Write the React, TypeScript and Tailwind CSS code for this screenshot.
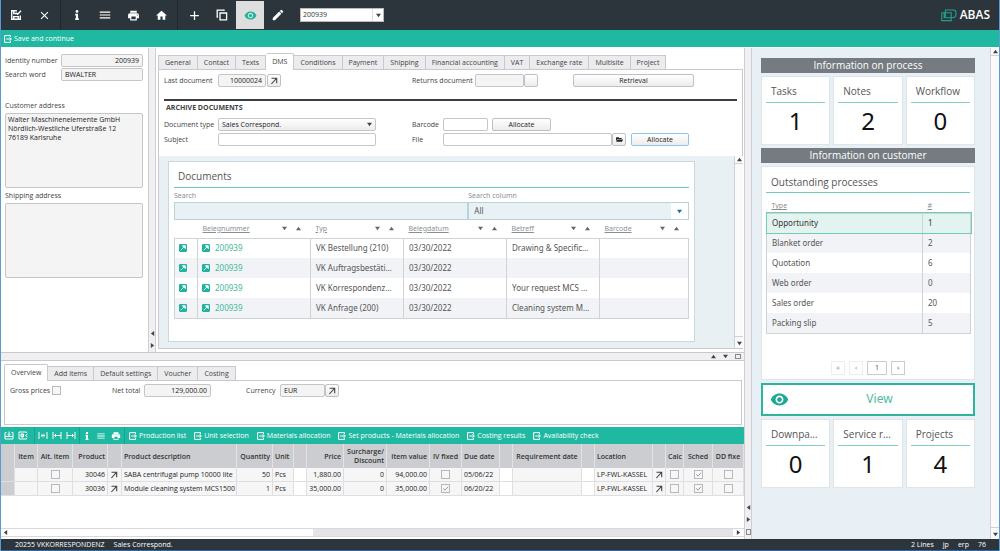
import { useState, type ReactNode } from 'react';
import { FaInfo, FaFolderOpen } from 'react-icons/fa';
import { MdClose, MdMenu, MdPrint, MdHome, MdAdd, MdEdit, MdRemoveRedEye } from 'react-icons/md';

const mainTabs = ['General', 'Contact', 'Texts', 'DMS', 'Conditions', 'Payment', 'Shipping', 'Financial accounting', 'VAT', 'Exchange rate', 'Multisite', 'Project'];
const itemTabs = ['Overview', 'Add items', 'Default settings', 'Voucher', 'Costing'];
const itemActions = ['Production list', 'Unit selection', 'Materials allocation', 'Set products - Materials allocation', 'Costing results', 'Availability check'];

const documents = [
  { id: 1, number: '200939', type: 'VK Bestellung (210)', date: '03/30/2022', subject: 'Drawing & Specific…' },
  { id: 2, number: '200939', type: 'VK Auftragsbestäti…', date: '03/30/2022', subject: '' },
  { id: 3, number: '200939', type: 'VK Korrespondenz…', date: '03/30/2022', subject: 'Your request MCS …' },
  { id: 4, number: '200939', type: 'VK Anfrage (200)', date: '03/30/2022', subject: 'Cleaning system M…' },
];

const processes = [
  ['Opportunity', 1],
  ['Blanket order', 2],
  ['Quotation', 6],
  ['Web order', 0],
  ['Sales order', 20],
  ['Packing slip', 5],
];

const items = [
  { product: '30046', text: 'SABA centrifugal pump 10000 lite', qty: 50, price: '1,880.00', value: '94,000.00', fixed: false, due: '05/06/22' },
  { product: '30036', text: 'Module cleaning system MCS1500', qty: 1, price: '35,000.00', value: '35,000.00', fixed: true, due: '06/20/22' },
];

const field = 'h-[13px] min-w-0 rounded-[2px] border border-[#c6c6c9] px-[3px] text-[7px] text-[#222] outline-none';
const button = 'flex h-[13px] items-center justify-center rounded-[2px] border border-[#c0c0c3] bg-linear-to-b from-white to-[#ececee] text-[7px] text-[#222]';

function ArrowIcon() {
  return (
    <svg className="h-[8px] w-[8px]" viewBox="0 0 8 8" fill="none" stroke="#444" strokeWidth="1.1">
      <path d="M1.5 1.2h5.2v5M6.5 1.4 1.4 7" />
    </svg>
  );
}

function ExportIcon() {
  return (
    <svg className="h-[8px] w-[8px]" viewBox="0 0 8 8" fill="none" stroke="currentColor" strokeWidth="1">
      <path d="M6.5 2V.6H.6v6.8h5.9V6M2.2 4h5M5.6 2.2 7.4 4 5.6 5.8" />
    </svg>
  );
}

function SaveIcon() {
  return (
    <svg className="h-[12px] w-[12px]" viewBox="0 0 12 12" fill="none" stroke="currentColor" strokeWidth="1.4">
      <path d="M10.3 6.5v3.8H1.7V1.7h5.2M3.8 2v2.5h3M3.7 10V7.6h4.6V10M6.3 3.8l1.4 1.5 3.3-3.6" />
    </svg>
  );
}

function CopyIcon() {
  return (
    <svg className="h-[12px] w-[12px]" viewBox="0 0 12 12" fill="none" stroke="currentColor" strokeWidth="1.3">
      <path d="M4 4h6.6v6.8H4zM2 8H1.2V1.2H8V2" />
    </svg>
  );
}

function LinkBox() {
  return (
    <svg className="h-[8px] w-[8px] shrink-0" viewBox="0 0 7 7">
      <rect width="7" height="7" rx="1" fill="#1fb39b" />
      <path d="M1.6 5.4 4.6 2.4M3 1.5h2.5V4z" fill="#fff" stroke="#fff" strokeWidth="0.8" />
    </svg>
  );
}

function Triangle({ dir, color = '#444' }: { dir: 'up' | 'down' | 'left' | 'right'; color?: string }) {
  const paths = { up: 'M0 5h6L3 1z', down: 'M0 1h6L3 5z', left: 'M5 0v6L1 3z', right: 'M1 0v6l4-3z' };
  return (
    <svg className="h-[5px] w-[5px] shrink-0" viewBox="0 0 6 6" fill={color}>
      <path d={paths[dir]} />
    </svg>
  );
}

function RowIcon({ kind }: { kind: 'both' | 'left' | 'right' | 'add' | 'insert' }) {
  const paths = {
    both: 'M1 1v7M9 1v7M3 4.5h4M4.5 3.2 3 4.5l1.5 1.3M5.5 3.2 7 4.5 5.5 5.8',
    left: 'M1 1v7M9 1v7M2.5 4.5H9M4 3 2.5 4.5 4 6',
    right: 'M1 1v7M9 1v7M1 4.5h6.5M6 3l1.5 1.5L6 6',
    add: 'M2.5 1.5H1v6.5h8V1.5H7.500M1 5.500h8M5 .5v4M3.500 3 5 4.500 6.500 3',
    insert: 'M8.500 2V1H1v7h7.500V7M3 3h2.500v3H3zM4 3v3M5 3v3M9.500 3 7.500 4.500l2 1.500',
  };
  return (
    <svg className="h-[9px] w-[10px]" viewBox="0 0 10 9" fill="none" stroke="currentColor" strokeWidth="1">
      <path d={paths[kind]} />
    </svg>
  );
}

function Check({ checked = false, label, id }: { checked?: boolean; label?: string; id?: string }) {
  return (
    <span className="relative inline-flex h-[9px] w-[9px] align-middle">
      <input id={id} type="checkbox" defaultChecked={checked} aria-label={label} className="peer h-[9px] w-[9px] appearance-none border border-[#b9b9bc] bg-[#f7f7f7]" />
      <svg className="pointer-events-none absolute inset-0 hidden peer-checked:block" viewBox="0 0 9 9" fill="none" stroke="#9a9a9d" strokeWidth="1">
        <path d="M2.2 4.4 4 6.2 7 2.8" />
      </svg>
    </span>
  );
}

function Tabs({ names, active, onSelect }: { names: string[]; active: string; onSelect: (name: string) => void }) {
  return (
    <div role="tablist" className="flex h-[16px] items-end">
      {names.map((name) => (
        <button
          key={name}
          type="button"
          role="tab"
          aria-selected={name === active}
          onClick={() => onSelect(name)}
          className={`whitespace-nowrap border-t border-r border-[#c9c9cd] px-[6px] text-[7px] first:border-l ${
            name === active ? 'relative -mb-px h-[17px] rounded-t-[2px] bg-white pb-px' : 'h-[14px] bg-[#ececee]'
          }`}
        >
          {name}
        </button>
      ))}
    </div>
  );
}

function ToolButton({ label, active = false, children }: { label: string; active?: boolean; children: ReactNode }) {
  return (
    <button type="button" aria-label={label} className={`flex h-[28px] w-[28px] items-center justify-center ${active ? 'bg-[#dededf] text-[#1fb39b]' : 'text-white'}`}>
      {children}
    </button>
  );
}

function SortHeader({ children }: { children: ReactNode }) {
  return (
    <th className="px-[5px] font-normal">
      <span className="flex items-center gap-[9px] pr-[5px]">
        <a href="#" className="flex-1 text-left text-[#8b8f93] underline">{children}</a>
        <Triangle dir="down" color="#666" />
        <Triangle dir="up" color="#666" />
      </span>
    </th>
  );
}

function Tile({ title, value }: { title: string; value: number }) {
  return (
    <div className="h-[69px] min-w-0 border border-[#dde5e8] bg-white px-[4px] text-center">
      <h3 className="h-[26px] border-b border-[#7fd0bf] px-[5px] pt-[4px] text-left text-[10px] leading-[20px] whitespace-nowrap text-[#555]">{title}</h3>
      <p className="pt-[3px] text-[24px] leading-[30px] text-[#111]">{value}</p>
    </div>
  );
}

function ScrollBar() {
  return (
    <div className="flex w-[9px] shrink-0 flex-col justify-between border-l border-[#d2d2d6] bg-[#fafafa]">
      <span className="flex h-[8px] items-center justify-center border-b border-[#d2d2d6]"><Triangle dir="up" /></span>
      <span className="flex h-[12px] items-end justify-center border-t border-[#d2d2d6] pb-[2px]"><Triangle dir="down" /></span>
    </div>
  );
}

function TopBar() {
  return (
    <header className="flex h-[30px] shrink-0 items-center bg-[#2c353b] pl-px pr-[9px]">
      <ToolButton label="Save"><SaveIcon /></ToolButton>
      <ToolButton label="Close"><MdClose size={13} /></ToolButton>
      <span className="mx-[2px] h-full w-px bg-[#20282d]" />
      <ToolButton label="Info"><FaInfo size={10} /></ToolButton>
      <ToolButton label="List"><MdMenu size={14} /></ToolButton>
      <ToolButton label="Print"><MdPrint size={13} /></ToolButton>
      <ToolButton label="Home"><MdHome size={13} /></ToolButton>
      <span className="mx-[2px] h-full w-px bg-[#20282d]" />
      <ToolButton label="New"><MdAdd size={15} /></ToolButton>
      <ToolButton label="Copy"><CopyIcon /></ToolButton>
      <ToolButton label="View" active><MdRemoveRedEye size={13} /></ToolButton>
      <ToolButton label="Edit"><MdEdit size={14} /></ToolButton>
      <div className="relative ml-[8px] flex">
        <select aria-label="Record" className="h-[14px] w-[84px] appearance-none border border-[#bbb] bg-white px-[2px] text-[7px] text-[#333]">
          <option>200939</option>
        </select>
        <span className="pointer-events-none absolute inset-y-px right-px flex w-[11px] items-center justify-center border-l border-[#ddd]">
          <Triangle dir="down" />
        </span>
      </div>
      <div className="ml-auto flex items-center gap-[3px] text-white">
        <svg className="h-[13px] w-[16px]" viewBox="0 0 16 13" fill="none" stroke="#1fa38f" strokeWidth="1.1">
          <path d="M.8 3.8h9.4v7.800H.8zM4.400 1h7.800c1.800 0 2.800 1 2.800 2.700v1.200c0 2-1.200 3.800-3.600 3.800H4.400zM3.200 3.800v5h5" />
        </svg>
        <span className="font-['Open_Sans'] text-[12px] leading-[16px] font-semibold">ABAS</span>
      </div>
    </header>
  );
}

function AddressColumn() {
  return (
    <section className="w-[147px] shrink-0 pt-[6px] pr-[5px] pl-[4px]">
      <div className="flex items-center">
        <label htmlFor="identity" className="w-[56px]">Identity number</label>
        <input id="identity" readOnly value="200939" className={`${field} flex-1 bg-[#f4f4f4] text-right`} />
      </div>
      <div className="mt-px flex items-center">
        <label htmlFor="search-word" className="w-[56px]">Search word</label>
        <input id="search-word" readOnly value="BWALTER" className={`${field} flex-1 bg-[#f4f4f4]`} />
      </div>
      <label htmlFor="customer" className="mt-[19px] block leading-[12px]">Customer address</label>
      <textarea
        id="customer"
        readOnly
        value={'Walter Maschinenelemente GmbH\nNördlich-Westliche Uferstraße 12\n76189 Karlsruhe'}
        className="mt-px block h-[75px] w-full resize-none rounded-[2px] border border-[#c6c6c9] bg-[#f4f4f4] px-[2px] pt-px text-[7px] leading-[9px] text-[#222]"
      />
      <label htmlFor="shipping" className="mt-[2px] block leading-[12px]">Shipping address</label>
      <textarea id="shipping" readOnly className="mt-px block h-[75px] w-full resize-none rounded-[2px] border border-[#c6c6c9] bg-[#f4f4f4]" />
    </section>
  );
}

function DocumentsTable() {
  return (
    <table className="w-full table-fixed border-collapse font-['Noto_Sans'] text-[8px] text-[#555]">
      <colgroup>
        <col className="w-[23px]" />
        <col className="w-[113px]" />
        <col className="w-[93px]" />
        <col className="w-[103px]" />
        <col className="w-[93px]" />
        <col className="w-[89px]" />
      </colgroup>
      <thead>
        <tr className="h-[18px] text-[7px]">
          <th />
          <SortHeader>Belegnummer</SortHeader>
          <SortHeader>Typ</SortHeader>
          <SortHeader>Belegdatum</SortHeader>
          <SortHeader>Betreff</SortHeader>
          <SortHeader>Barcode</SortHeader>
        </tr>
      </thead>
      <tbody className="border border-[#cfd3d6]">
        {documents.map((doc) => (
          <tr key={doc.id} className="h-[20px] whitespace-nowrap even:bg-[#f1f3f6] [&>td]:border-r [&>td]:border-[#cfd3d6]">
            <td className="pl-[4px]"><LinkBox /></td>
            <td className="px-[4px]">
              <a href="#" className="flex items-center gap-[5px] text-[#3fb89a]"><LinkBox />{doc.number}</a>
            </td>
            <td className="px-[5px]">{doc.type}</td>
            <td className="px-[5px]">{doc.date}</td>
            <td className="px-[5px]">{doc.subject}</td>
            <td />
          </tr>
        ))}
      </tbody>
    </table>
  );
}

function DmsPanel() {
  return (
    <div className="flex min-h-0 flex-1 flex-col border border-[#c9c9cd]">
      <div className="pr-[5px] pl-[5px]">
        <div className="flex items-center pt-[4px]">
          <label htmlFor="last-doc" className="w-[54px]">Last document</label>
          <input id="last-doc" readOnly value="10000024" className={`${field} w-[48px] bg-[#f4f4f4] text-right`} />
          <button type="button" aria-label="Open last document" className={`${button} ml-px w-[14px]`}><ArrowIcon /></button>
          <label htmlFor="return-doc" className="ml-[131px] w-[63px]">Returns document</label>
          <input id="return-doc" readOnly className={`${field} w-[49px] bg-[#f4f4f4]`} />
          <button type="button" aria-label="Open returns document" className={`${button} w-[14px]`} />
          <button type="button" className={`${button} ml-[35px] w-[121px]`}>Retrieval</button>
        </div>
        <h2 className="mt-[12px] border-t-2 border-[#3b3d44] px-[2px] text-[7px] leading-[13px] font-bold">ARCHIVE DOCUMENTS</h2>
        <div className="mt-[4px] flex items-center">
          <label htmlFor="doc-type" className="w-[54px]">Document type</label>
          <div className="relative flex w-[158px]">
            <select id="doc-type" className={`${field} w-full appearance-none bg-linear-to-b from-white to-[#ececee] py-0`}>
              <option>Sales Correspond.</option>
            </select>
            <span className="pointer-events-none absolute inset-y-0 right-[4px] flex items-center"><Triangle dir="down" /></span>
          </div>
          <label htmlFor="barcode" className="ml-[36px] w-[31px]">Barcode</label>
          <input id="barcode" className={`${field} w-[45px]`} />
          <button type="button" className={`${button} ml-[4px] w-[59px]`}>Allocate</button>
        </div>
        <div className="mt-[2px] flex items-center">
          <label htmlFor="subject" className="w-[54px]">Subject</label>
          <input id="subject" className={`${field} w-[158px]`} />
          <label htmlFor="file" className="ml-[36px] w-[31px]">File</label>
          <input id="file" className={`${field} w-[169px]`} />
          <button type="button" aria-label="Choose file" className={`${button} w-[14px]`}><FaFolderOpen size={7} /></button>
          <button type="button" className="ml-[5px] flex h-[13px] w-[58px] items-center justify-center rounded-[2px] border border-[#8fc4e8] bg-linear-to-b from-white to-[#ececee] text-[7px] text-[#222]">Allocate</button>
        </div>
      </div>
      <div className="mt-[10px] flex min-h-0 flex-1 bg-[#e8f0f4]">
        <section className="mt-[5px] mr-[39px] mb-[6px] ml-[9px] flex-1 border border-[#cdd8de] bg-white px-[5px] font-['Noto_Sans']">
          <h2 className="h-[26px] border-b border-[#6ec5b8] px-[4px] pt-[4px] font-['Open_Sans'] text-[10px] leading-[20px] text-[#555]">Documents</h2>
          <div className="flex pt-[2px] text-[#8b8f93]">
            <div className="flex-4">
              <label htmlFor="doc-search" className="block leading-[12px]">Search</label>
              <input id="doc-search" className="block h-[18px] w-full border border-[#b9d3d8] bg-[#e8f2f5] px-[5px] text-[8px]" />
            </div>
            <div className="relative flex-3">
              <label htmlFor="doc-column" className="block leading-[12px]">Search column</label>
              <select id="doc-column" className="block h-[18px] w-full appearance-none border border-[#b9d3d8] bg-[#e8f2f5] px-[5px] text-[8px] text-[#555]">
                <option>All</option>
              </select>
              <span className="pointer-events-none absolute right-px bottom-px flex h-[16px] w-[17px] items-center justify-center bg-white"><Triangle dir="down" color="#186d93" /></span>
            </div>
          </div>
          <DocumentsTable />
        </section>
        <ScrollBar />
      </div>
    </div>
  );
}

function ItemsTable() {
  return (
    <table className="w-full table-fixed border-separate border-spacing-0 text-[7px] text-[#222] [&_td]:border-r [&_td]:border-b [&_td]:border-[#dfdfe1] [&_th]:border-r [&_th]:border-[#e2e2e4] [&_th]:font-semibold">
      <colgroup>
        <col className="w-[14px]" />
        <col className="w-[23px]" />
        <col className="w-[35px]" />
        <col className="w-[35px]" />
        <col className="w-[14px]" />
        <col className="w-[115px]" />
        <col className="w-[36px]" />
        <col className="w-[21px]" />
        <col className="w-[13px]" />
        <col className="w-[37px]" />
        <col className="w-[43px]" />
        <col className="w-[43px]" />
        <col className="w-[32px]" />
        <col className="w-[38px]" />
        <col className="w-[13px]" />
        <col className="w-[69px]" />
        <col className="w-[13px]" />
        <col className="w-[58px]" />
        <col className="w-[13px]" />
        <col className="w-[18px]" />
        <col className="w-[29px]" />
        <col className="w-[31px]" />
      </colgroup>
      <thead>
        <tr className="h-[24px] bg-[#cccdd0] leading-[9px] whitespace-nowrap text-[#333] [&>th]:px-[2px]">
          <th />
          <th>Item</th>
          <th>Alt. item</th>
          <th className="text-right">Product</th>
          <th />
          <th className="text-left">Product description</th>
          <th className="text-right">Quantity</th>
          <th className="text-left">Unit</th>
          <th />
          <th className="text-right">Price</th>
          <th className="text-right">Surcharge/<br />Discount</th>
          <th className="text-right">Item value</th>
          <th>IV fixed</th>
          <th className="text-left">Due date</th>
          <th />
          <th>Requirement date</th>
          <th />
          <th className="text-left">Location</th>
          <th />
          <th>Calc</th>
          <th>Sched</th>
          <th>DD fixe</th>
        </tr>
      </thead>
      <tbody>
        {items.map((item) => (
          <tr key={item.product} className="h-[14px] bg-[#f6f6f7] leading-[9px] whitespace-nowrap [&>td]:px-[2px]">
            <td className="bg-[#cccdd0]" />
            <td />
            <td className="text-center"><Check label="Alternative item" /></td>
            <td className="text-right">{item.product}</td>
            <td><button type="button" aria-label="Open product" className="flex"><ArrowIcon /></button></td>
            <td>{item.text}</td>
            <td className="text-right">{item.qty}</td>
            <td>Pcs</td>
            <td className="bg-white" />
            <td className="text-right">{item.price}</td>
            <td className="text-right">0</td>
            <td className="text-right">{item.value}</td>
            <td className="text-center"><Check label="Item value fixed" checked={item.fixed} /></td>
            <td>{item.due}</td>
            <td className="bg-white" />
            <td />
            <td className="bg-white" />
            <td>LP-FWL-KASSEL</td>
            <td><button type="button" aria-label="Open location" className="flex"><ArrowIcon /></button></td>
            <td className="text-center"><Check label="Calculate" /></td>
            <td className="text-center"><Check label="Scheduled" checked /></td>
            <td className="text-center"><Check label="Due date fixed" /></td>
          </tr>
        ))}
      </tbody>
    </table>
  );
}

function ItemsSection() {
  const [tab, setTab] = useState('Overview');

  return (
    <section className="flex min-h-0 flex-1 flex-col">
      <div className="pt-[3px] pr-[2px] pl-[3px]">
        <Tabs names={itemTabs} active={tab} onSelect={setTab} />
        <div className="flex h-[45px] items-start border border-[#c9c9cd] px-[5px] pt-[3px] leading-[13px]">
          <label htmlFor="gross" className="w-[42px]">Gross prices</label>
          <span className="flex h-[13px] items-center"><Check id="gross" /></span>
          <label htmlFor="net" className="ml-[51px] w-[32px]">Net total</label>
          <input id="net" readOnly value="129,000.00" className={`${field} w-[67px] bg-[#f4f4f4] text-right`} />
          <label htmlFor="currency" className="ml-[35px] w-[34px]">Currency</label>
          <input id="currency" readOnly value="EUR" className={`${field} w-[45px] bg-[#f4f4f4]`} />
          <button type="button" aria-label="Open currency" className={`${button} w-[14px]`}><ArrowIcon /></button>
        </div>
      </div>
      <div className="mt-[2px] flex h-[17px] shrink-0 items-center bg-[#1fb9a2] text-white">
        <div className="flex h-full items-center gap-[4px] border-r border-[#17a48f] pr-[6px] pl-[3px]">
          <button type="button" aria-label="Add row"><RowIcon kind="add" /></button>
          <button type="button" aria-label="Insert row"><RowIcon kind="insert" /></button>
        </div>
        <div className="flex h-full items-center gap-[4px] border-r border-[#17a48f] px-[3px]">
          <button type="button" aria-label="Expand"><RowIcon kind="both" /></button>
          <button type="button" aria-label="Move left"><RowIcon kind="left" /></button>
          <button type="button" aria-label="Move right"><RowIcon kind="right" /></button>
        </div>
        <div className="flex h-full items-center gap-[5px] border-r border-[#17a48f] px-[3px]">
          <button type="button" aria-label="Item info"><FaInfo size={8} /></button>
          <button type="button" aria-label="Item list"><MdMenu size={10} /></button>
          <button type="button" aria-label="Print items"><MdPrint size={10} /></button>
        </div>
        <div className="flex gap-[8px] pl-[4px]">
          {itemActions.map((name) => (
            <button key={name} type="button" className="flex items-center gap-[2px] whitespace-nowrap">
              <ExportIcon />
              {name}
            </button>
          ))}
        </div>
      </div>
      <div className="min-h-0 flex-1 overflow-hidden"><ItemsTable /></div>
      <div className="mb-[2px] flex h-[9px] shrink-0 items-center justify-between border-y border-[#d9d9dc] bg-[#e4e4e6]">
        <span className="flex h-full w-[42%] items-center bg-white pl-[2px]"><Triangle dir="left" /></span>
        <span className="flex h-full items-center bg-white px-[3px]"><Triangle dir="right" /></span>
      </div>
    </section>
  );
}

function InfoPanel() {
  return (
    <aside className="flex w-[247px] shrink-0 bg-[#e8f0f5] font-['Noto_Sans']">
      <div className="min-w-0 flex-1 pt-[10px] pr-[15px] pl-[9px] [&_h2]:font-['Open_Sans'] [&_h3]:font-['Open_Sans']">
        <h2 className="bg-[#757b80] text-center text-[10px] leading-[15px] font-medium text-white">Information on process</h2>
        <div className="mt-[3px] grid grid-cols-3 gap-[3px]">
          <Tile title="Tasks" value={1} />
          <Tile title="Notes" value={2} />
          <Tile title="Workflow" value={0} />
        </div>
        <h2 className="mt-[3px] bg-[#757b80] text-center text-[10px] leading-[15px] font-medium text-white">Information on customer</h2>
        <section className="mt-[3px] border border-[#dde5e8] bg-white px-[4px] pb-[4px] text-[8px] text-[#555]">
          <h3 className="h-[26px] border-b border-[#6fceba] px-[5px] pt-[5px] text-[10px] leading-[20px]">Outstanding processes</h3>
          <table className="mt-[7px] w-full table-fixed border-collapse text-left">
            <colgroup>
              <col className="w-[156px]" />
              <col className="w-[48px]" />
            </colgroup>
            <thead>
              <tr className="h-[13px] text-[7px] text-[#8b8f93] underline">
                <th className="px-[5px] font-normal">Type</th>
                <th className="px-[5px] font-normal">#</th>
              </tr>
            </thead>
            <tbody className="border border-[#cfd3d6]">
              {processes.map(([name, count], index) => (
                <tr key={name} className={`h-[20px] ${index === 0 ? 'bg-[#e3f4f0] text-[#333] outline-1 outline-[#6fceb5]' : 'even:bg-[#f1f3f6]'}`}>
                  <td className="border-r border-[#cfd3d6] px-[5px]">{name}</td>
                  <td className="px-[5px]">{count}</td>
                </tr>
              ))}
            </tbody>
          </table>
          <nav aria-label="Pages" className="mt-[27px] flex justify-center gap-[4px] text-[7px] [&>button]:h-[14px] [&>button]:border">
            <button type="button" className="w-[14px] border-[#eee] text-[#999]">«</button>
            <button type="button" className="w-[14px] border-[#eee] text-[#999]">‹</button>
            <button type="button" className="w-[20px] border-[#ccc]">1</button>
            <button type="button" className="w-[14px] border-[#ccc]">›</button>
          </nav>
        </section>
        <button type="button" className="mt-[3px] flex h-[33px] w-full items-center border-2 border-[#2fb39b] bg-white px-[7px] text-[12px] text-[#4bbd9d]">
          <MdRemoveRedEye size={19} color="#1fa994" />
          <span className="flex-1 pl-[4px]">View</span>
        </button>
        <div className="mt-[3px] grid grid-cols-3 gap-[3px]">
          <Tile title="Downpa…" value={0} />
          <Tile title="Service r…" value={1} />
          <Tile title="Projects" value={4} />
        </div>
      </div>
      <ScrollBar />
    </aside>
  );
}

export default function App() {
  const [tab, setTab] = useState('DMS');

  return (
    <div className="flex h-screen flex-col overflow-hidden border-x border-[#5b9bd0] bg-white font-['Open_Sans',sans-serif] text-[7px] leading-[10px] text-[#444]">
      <TopBar />
      <div className="flex h-[17px] shrink-0 items-center bg-[#1fb9a2] pl-[3px] text-white">
        <button type="button" className="flex items-center gap-[2px]"><ExportIcon />Save and continue</button>
      </div>
      <div className="flex min-h-0 flex-1 pt-px">
        <main className="flex min-w-0 flex-1 flex-col">
          <div className="flex h-[304px] shrink-0">
            <AddressColumn />
            <div className="flex w-[8px] shrink-0 flex-col items-center justify-end gap-[7px] border-x border-[#cfcfd3] bg-[#f0f0f3] pb-[4px]">
              <Triangle dir="left" />
              <Triangle dir="right" />
            </div>
            <div className="flex min-w-0 flex-1 flex-col pt-[5px] pr-px pb-[3px] pl-[2px]">
              <Tabs names={mainTabs} active={tab} onSelect={setTab} />
              <DmsPanel />
            </div>
          </div>
          <div className="flex h-[9px] shrink-0 items-center justify-end gap-[7px] border-y border-[#c9c9cd] bg-[#f0f0f3] pr-[3px]">
            <Triangle dir="up" />
            <Triangle dir="down" />
            <span className="h-[5px] w-[6px] border border-[#888]" />
          </div>
          <ItemsSection />
        </main>
        <div className="flex w-[8px] shrink-0 flex-col items-center justify-end gap-[7px] border-x border-[#cfcfd3] bg-[#f0f0f3] pb-[4px]">
          <Triangle dir="left" />
          <Triangle dir="right" />
          <span className="h-[6px] w-[5px] border border-[#888]" />
        </div>
        <InfoPanel />
      </div>
      <footer className="flex h-[12px] shrink-0 items-center border-b border-[#2c6aa5] bg-[#2c353b] pr-[13px] pl-[14px] text-white">
        <span>20255 VKKORRESPONDENZ</span>
        <span className="ml-[9px]">Sales Correspond.</span>
        <span className="ml-auto flex gap-[9px]">
          <span>2 Lines</span>
          <span>jp</span>
          <span>erp</span>
          <span>76</span>
        </span>
      </footer>
    </div>
  );
}
